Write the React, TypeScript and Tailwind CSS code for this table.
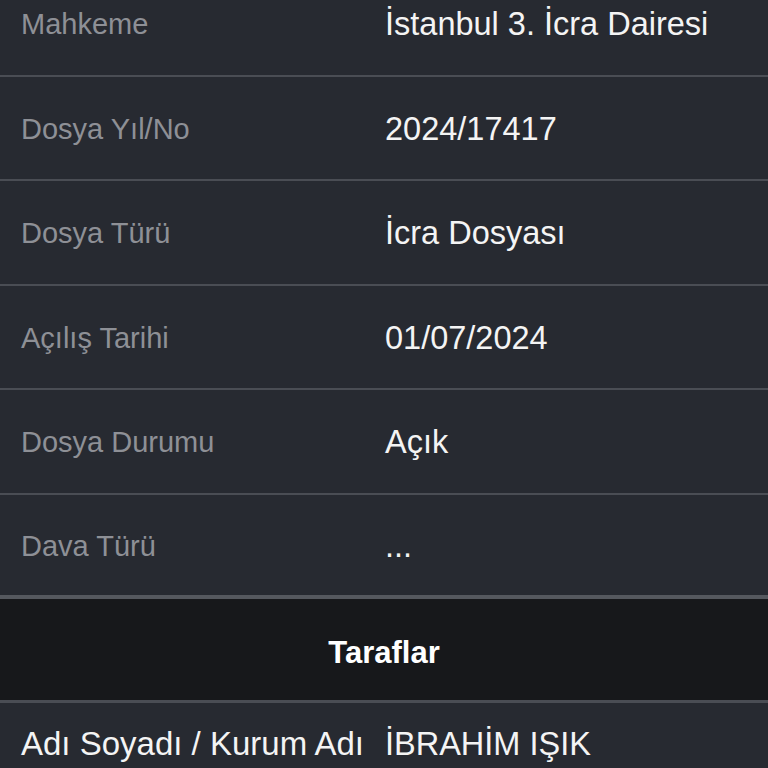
const rows = [
  { label: 'Mahkeme', value: 'İstanbul 3. İcra Dairesi' },
  { label: 'Dosya Yıl/No', value: '2024/17417' },
  { label: 'Dosya Türü', value: 'İcra Dosyası' },
  { label: 'Açılış Tarihi', value: '01/07/2024' },
  { label: 'Dosya Durumu', value: 'Açık' },
  { label: 'Dava Türü', value: '...' },
];

export default function App() {
  return (
    <div
      className="w-[768px] h-[768px] overflow-hidden bg-[#272a31]"
      style={{ fontFamily: '"Liberation Sans", Arial, sans-serif' }}
    >
      <div className="-mt-[28px]">
        {rows.map((row, i) => (
          <div
            key={row.label}
            className={
              i === rows.length - 1
                ? 'flex items-center h-[104.5px] pt-[3px] border-b-4 border-[#55585e]'
                : 'flex items-center h-[104.5px] pt-[3px] border-b-2 border-[#4a4d54]'
            }
          >
            <div className="w-[385px] pl-[21px] text-[29px] text-[#8e9096]">{row.label}</div>
            <div className="text-[32.5px] text-[#f4f4f4]">{row.value}</div>
          </div>
        ))}

        <div className="flex items-center justify-center h-[104px] bg-[#17181b] border-b-[3px] border-[#4a4d54]">
          <h2 className="text-[31px] font-bold text-white pt-[8px]">Taraflar</h2>
        </div>

        <div className="flex items-center h-[80px] pt-[2px]">
          <div className="w-[385px] pl-[21px] text-[33px] text-[#f4f4f4]">Adı Soyadı / Kurum Adı</div>
          <div className="text-[32.5px] text-[#f4f4f4]">İBRAHİM IŞIK</div>
        </div>
      </div>
    </div>
  );
}
